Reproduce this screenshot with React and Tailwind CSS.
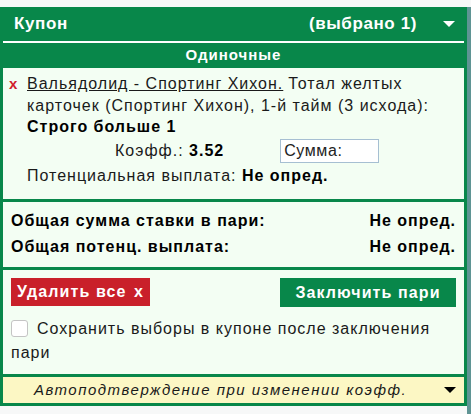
import React from 'react';

const Caret = ({ className }) => (
  <svg width="12" height="6" viewBox="0 0 12 6" className={className}>
    <path d="M0 0h12L6 6z" fill="currentColor" />
  </svg>
);

const App = () => {
  return (
    <div className="w-[471px] h-[414px] bg-[#f7f8f8] pt-[7px] flex font-['Liberation_Sans',Arial,sans-serif]">
      <div className="w-[467px] self-start bg-[#08874a] px-[3px] pb-[3px]">
        {/* header */}
        <div className="h-[34px] flex items-center text-white font-bold text-[17px] tracking-[0.6px] pl-[11px] pr-[9px]">
          <span>Купон</span>
          <span className="ml-auto">(выбрано 1)</span>
          <Caret className="ml-[26px] text-white" />
        </div>
        <div className="h-[2px] bg-white" />
        <div className="h-[25px] flex items-center justify-center text-white font-bold text-[15px] tracking-[1px]">
          Одиночные
        </div>

        <div className="flex flex-col gap-[3px] text-[16px] tracking-[1px] text-[#1a1a1a]">
          {/* bet */}
          <div className="bg-[#f3fef3] h-[131px] pt-[5px] pl-[6px] pr-[6px] leading-[21.5px]">
            <div className="flex">
              <span className="w-[18px] shrink-0 text-[#d0202a] font-bold text-[15px]">x</span>
              <div>
                <div className="flex gap-[5px]">
                  <span className="underline">Вальядолид - Спортинг Хихон.</span>
                  <span>Тотал желтых</span>
                </div>
                <div>карточек (Спортинг Хихон), 1-й тайм (3 исхода):</div>
                <b className="block text-black">Строго больше 1</b>
              </div>
            </div>
            <div className="flex items-center mt-[1px] h-[24px]">
              <span className="ml-[106px]">Коэфф.: <b className="text-black">3.52</b></span>
              <input
                readOnly
                placeholder="Сумма:"
                className="ml-[56px] w-[99px] h-[24px] bg-white border border-[#a6bfd2] px-[3px] text-[16px] tracking-[0.6px] placeholder:text-[#222] outline-none"
              />
            </div>
            <div className="mt-[2px] ml-[18px]">
              Потенциальная выплата: <b className="text-black">Не опред.</b>
            </div>
          </div>

          {/* totals */}
          <div className="bg-[#f3fef3] h-[65px] px-[8px] pt-[6px] font-bold text-black leading-[26px]">
            <div className="flex justify-between">
              <span>Общая сумма ставки в пари:</span>
              <span>Не опред.</span>
            </div>
            <div className="flex justify-between">
              <span>Общая потенц. выплата:</span>
              <span>Не опред.</span>
            </div>
          </div>

          {/* actions */}
          <div className="bg-[#f3fef3] h-[104px] px-[8px] pt-[8px]">
            <div className="flex justify-between">
              <button className="h-[28px] w-[139px] bg-[#c9202a] text-white font-bold text-[16px] tracking-[1.1px] text-left pl-[6px]">
                Удалить все <span className="ml-[2px]">x</span>
              </button>
              <button className="h-[29px] w-[176px] bg-[#08874a] text-white font-bold text-[16px] tracking-[1.1px]">
                Заключить пари
              </button>
            </div>
            <div className="mt-[10px] leading-[24px] text-[#1a1a1a] pr-[20px]">
              <span className="inline-block align-[-3px] w-[17px] h-[17px] rounded-[3px] border border-[#c4c4c4] bg-white mr-[9px]" />
              Сохранить выборы в купоне после заключения пари
            </div>
          </div>

          {/* autoconfirm */}
          <div className="bg-[#fcf7c4] h-[26px] flex items-center pr-[8px] text-[15px] tracking-[1.5px] italic text-[#1a1a1a]">
            <span className="flex-1 text-center pl-[8px]">Автоподтверждение при изменении коэфф.</span>
            <Caret className="ml-[14px] text-black" />
          </div>
        </div>
      </div>
      <div className="w-[4px] h-[407px] bg-[#5f9494]" />
    </div>
  );
};

export default App;
